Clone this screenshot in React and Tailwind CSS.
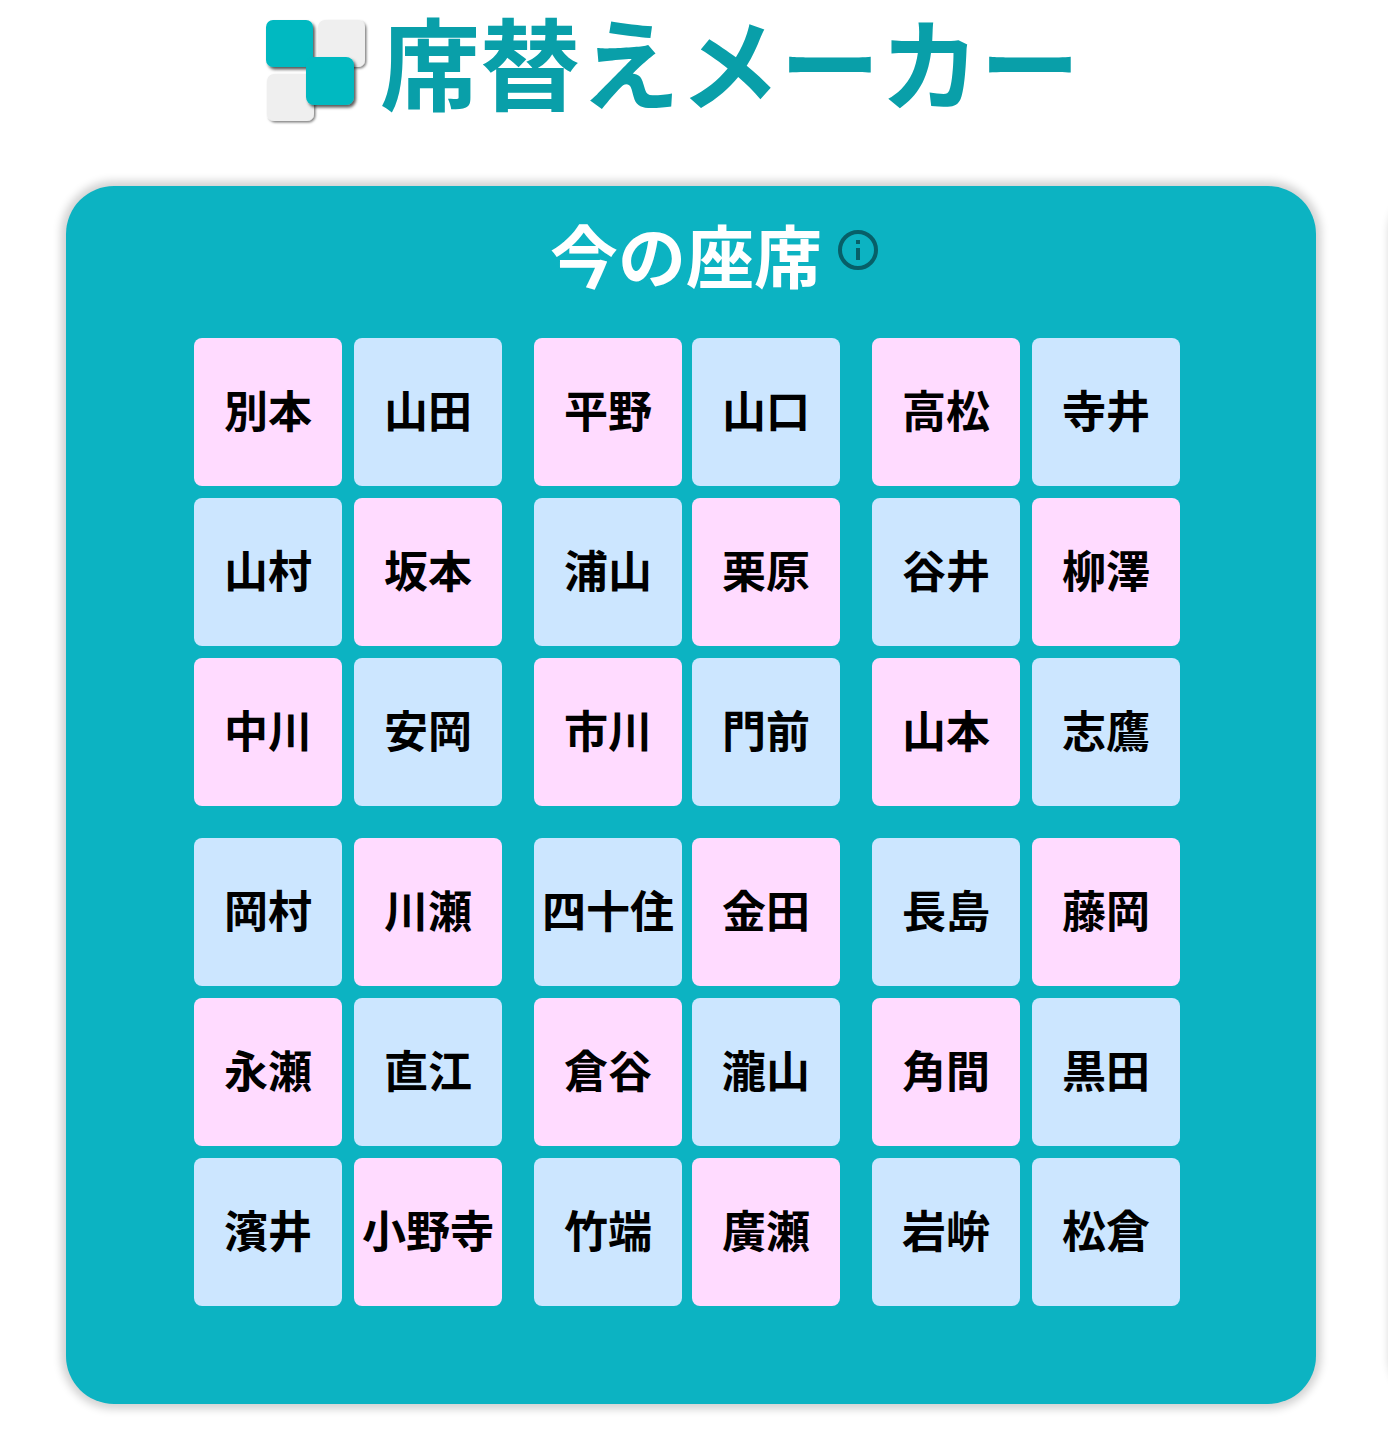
const rows = [
  ["f別本", "m山田", "f平野", "m山口", "f高松", "m寺井"],
  ["m山村", "f坂本", "m浦山", "f栗原", "m谷井", "f柳澤"],
  ["f中川", "m安岡", "f市川", "m門前", "f山本", "m志鷹"],
  ["m岡村", "f川瀬", "m四十住", "f金田", "m長島", "f藤岡"],
  ["f永瀬", "m直江", "f倉谷", "m瀧山", "f角間", "m黒田"],
  ["m濱井", "f小野寺", "m竹端", "f廣瀬", "m岩峅", "m松倉"],
];

function Logo() {
  return (
    <svg className="mt-[14px] size-[112px] shrink-0" viewBox="0 0 112 112" aria-hidden="true">
      <defs>
        <filter id="soft" x="-20%" y="-20%" width="150%" height="150%">
          <feDropShadow dx="1.5" dy="1.5" stdDeviation="1" floodColor="#000" floodOpacity="0.5" />
        </filter>
        <filter id="deep" x="-20%" y="-20%" width="150%" height="150%">
          <feDropShadow dx="2" dy="2.5" stdDeviation="1.5" floodColor="#000" floodOpacity="0.65" />
        </filter>
      </defs>
      <rect x="58" y="6" width="47" height="47" rx="7" fill="#efefef" filter="url(#soft)" />
      <rect x="7" y="60" width="47" height="47" rx="7" fill="#efefef" filter="url(#soft)" />
      <rect x="6" y="6" width="47" height="47" rx="7" fill="#02b9c1" filter="url(#deep)" />
      <rect x="46" y="43" width="48" height="48" rx="8" fill="#02b9c1" filter="url(#deep)" />
    </svg>
  );
}

function Seat({ seat }) {
  return (
    <div className={`flex size-[148px] items-center justify-center rounded-lg pb-[6px] text-[44px] leading-none font-bold whitespace-nowrap text-black ${seat[0] === "f" ? "bg-[#ffdbff]" : "bg-[#cce6ff]"}`}>
      {seat.slice(1)}
    </div>
  );
}

export default function App() {
  return (
    <div className="bg-white font-['Noto_Sans_CJK_JP',sans-serif]" lang="ja">
      <header className="flex h-[170px] items-start justify-center gap-2 pr-[48px]">
        <Logo />
        <h1 className="text-[100px] leading-[120px] font-bold text-[#099fa9]">席替えメーカー</h1>
      </header>
      <main className="flex overflow-hidden pt-4 pb-8 pl-[66px]">
        <section className="w-[calc(100%-72px)] shrink-0 rounded-[48px] bg-[#0cb3c2] pt-[28px] pb-[98px] shadow-[0_0_8px_5px_rgba(0,0,0,0.18)]">
          <div className="flex justify-center gap-4 pl-[46px]">
            <h2 className="text-[68px] leading-[80px] font-bold text-white">今の座席</h2>
            <button type="button" aria-label="情報" className="mt-4 size-10 text-[#075f68]">
              <svg viewBox="0 0 40 40" fill="none">
                <circle cx="20" cy="20" r="18" stroke="currentColor" strokeWidth="4" />
                <path d="M18 10h4v4h-4zM18 18h4v12h-4z" fill="currentColor" />
              </svg>
            </button>
          </div>
          <div className="mt-[44px] flex flex-col gap-8">
            {[rows.slice(0, 3), rows.slice(3)].map((block, b) => (
              <div key={b} className="flex justify-center gap-8 pr-2">
                {[0, 2, 4].map((c) => (
                  <div key={c} className={`grid grid-cols-2 gap-y-3 ${c === 2 ? "gap-x-[10px]" : "gap-x-3"}`}>
                    {block.flatMap((r) => r.slice(c, c + 2)).map((s) => <Seat key={s} seat={s} />)}
                  </div>
                ))}
              </div>
            ))}
          </div>
        </section>
        <section aria-label="次の座席" className="ml-[78px] w-[calc(100%-72px)] shrink-0 rounded-[48px] bg-[#0cb3c2] shadow-[0_0_8px_5px_rgba(0,0,0,0.18)]" />
      </main>
    </div>
  );
}
